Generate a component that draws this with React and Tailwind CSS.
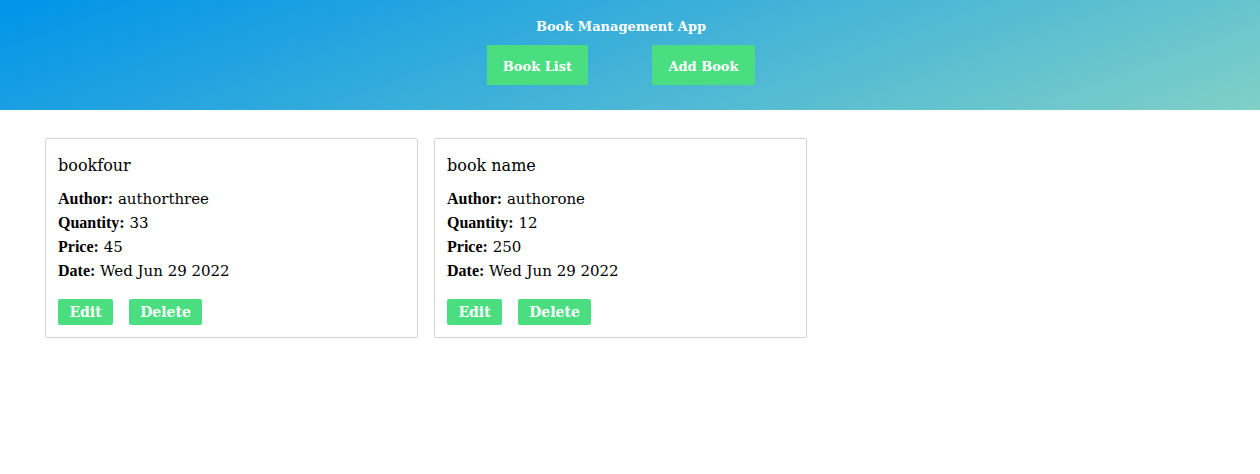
import React from "react";

const books = [
  { name: "bookfour", author: "authorthree", quantity: 33, price: 45, date: "Wed Jun 29 2022" },
  { name: "book name", author: "authorone", quantity: 12, price: 250, date: "Wed Jun 29 2022" },
];

const label = { fontFamily: '"Liberation Serif", serif' };

export default function App() {
  return (
    <div className="min-h-[474px] bg-white text-black" style={{ fontFamily: '"DejaVu Serif", serif' }}>
      <header className="h-[110px] pr-[18px] bg-[linear-gradient(160deg,#0093E9_0%,#80D0C7_100%)] flex flex-col items-center">
        <h1 className="mt-[18px] text-[13px] leading-[18px] font-bold text-white">Book Management App</h1>
        <nav className="mt-[9px] flex gap-[64px]">
          <button className="h-[40px] w-[101px] pt-[3px] bg-[#4ade80] text-white text-[13px] font-bold">Book List</button>
          <button className="h-[40px] w-[103px] pt-[3px] bg-[#4ade80] text-white text-[13px] font-bold">Add Book</button>
        </nav>
      </header>
      <main className="pt-[28px] pl-[45px] flex gap-[16px]">
        {books.map((b) => (
          <div key={b.name} className="w-[373px] h-[200px] border border-[#d1d5db] rounded-[2px] px-[12px] pt-[15px]">
            <h2 className="text-[16px] leading-[24px]">{b.name}</h2>
            <div className="mt-[9px] text-[15px] leading-[24px]">
              <p><span className="font-bold text-[16px]" style={label}>Author:</span> {b.author}</p>
              <p><span className="font-bold text-[16px]" style={label}>Quantity:</span> {b.quantity}</p>
              <p><span className="font-bold text-[16px]" style={label}>Price:</span> {b.price}</p>
              <p><span className="font-bold text-[16px]" style={label}>Date:</span> {b.date}</p>
            </div>
            <div className="mt-[16px] flex gap-[16px]">
              <button className="h-[26px] w-[55px] pt-[1px] bg-[#4ade80] text-white text-[14px] font-bold rounded-[2px]">Edit</button>
              <button className="h-[26px] w-[73px] pt-[1px] bg-[#4ade80] text-white text-[14px] font-bold rounded-[2px]">Delete</button>
            </div>
          </div>
        ))}
      </main>
    </div>
  );
}
